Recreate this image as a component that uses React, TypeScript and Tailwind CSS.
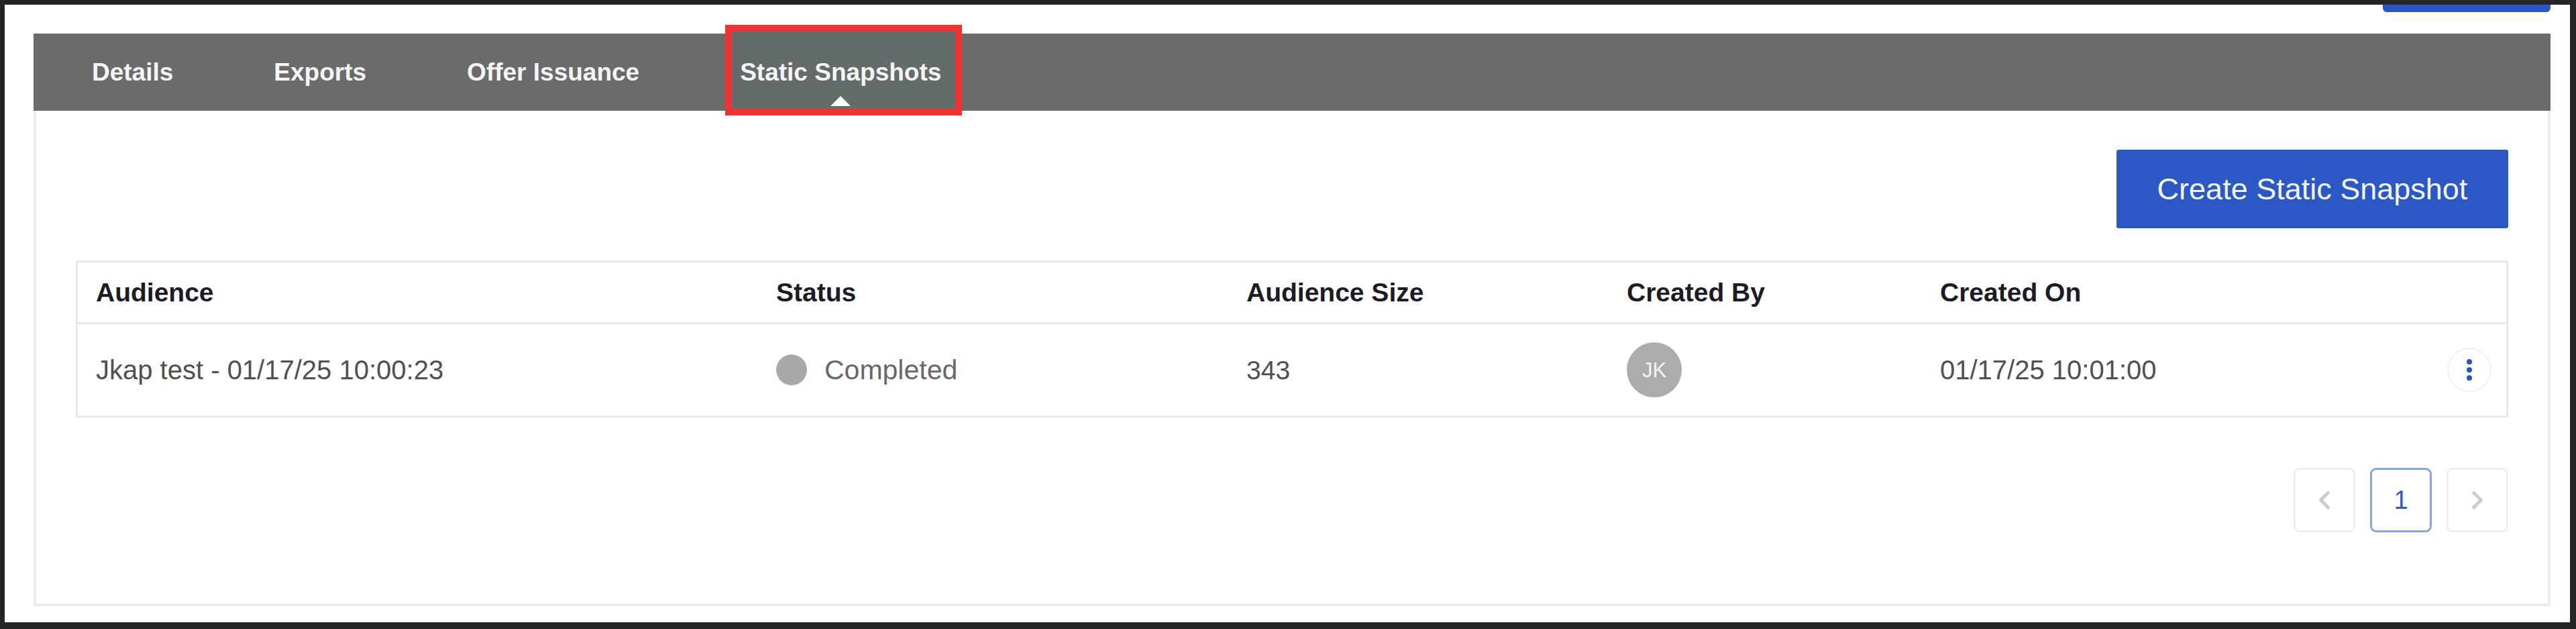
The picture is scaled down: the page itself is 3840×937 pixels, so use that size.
import { ChevronLeft, ChevronRight } from "lucide-react";

const tabs = ["Details", "Exports", "Offer Issuance", "Static Snapshots"];
const activeTab = "Static Snapshots";

const columns = ["Audience", "Status", "Audience Size", "Created By", "Created On"];

const rows = [
  {
    audience: "Jkap test - 01/17/25 10:00:23",
    status: "Completed",
    size: "343",
    initials: "JK",
    createdOn: "01/17/25 10:01:00",
  },
];

const gridCols = "grid grid-cols-[1014px_701px_567px_467px_1fr_66px] items-center pl-[27px] pr-[22px]";

function TabBar() {
  return (
    <div className="h-[115px] bg-[#6b6b6b] flex items-center pl-[87px] gap-[150px]">
      {tabs.map((t) => {
        const active = t === activeTab;
        return (
          <div key={t} className="relative h-full flex items-center">
            {active && (
              <div className="absolute -left-[22px] -right-[31px] -top-[13px] -bottom-[7px] border-[10px] border-[#f03232] bg-[#636b6b]" />
            )}
            <span className="relative z-10 text-[37px] font-bold text-[#f5f5f5] leading-none whitespace-nowrap">
              {t}
            </span>
            {active && (
              <span className="absolute z-10 left-1/2 -translate-x-1/2 bottom-[7px] w-0 h-0 border-l-[15px] border-r-[15px] border-b-[15px] border-l-transparent border-r-transparent border-b-white" />
            )}
          </div>
        );
      })}
    </div>
  );
}

function Kebab() {
  return (
    <div className="w-[66px] h-[66px] rounded-full border-2 border-[#efefef] flex flex-col items-center justify-center gap-[4px]">
      <span className="w-[8px] h-[8px] rounded-full bg-[#2a52c8]" />
      <span className="w-[8px] h-[8px] rounded-full bg-[#2a52c8]" />
      <span className="w-[8px] h-[8px] rounded-full bg-[#2a52c8]" />
    </div>
  );
}

function SnapshotTable() {
  return (
    <div className="border-[3px] border-[#e9e9e9]">
      <div className={`${gridCols} h-[92px] border-b-[3px] border-[#e9e9e9]`}>
        {columns.map((c) => (
          <div key={c} className="text-[39px] font-bold text-[#1c1c26] leading-none whitespace-nowrap">
            {c}
          </div>
        ))}
        <div />
      </div>
      {rows.map((r) => (
        <div key={r.audience} className={`${gridCols} h-[136px] text-[40px] leading-none text-[#505050]`}>
          <div className="whitespace-nowrap">{r.audience}</div>
          <div className="flex items-center gap-[26px]">
            <span className="w-[46px] h-[46px] rounded-full bg-[#a9a9a9]" />
            <span className="text-[#686868] text-[41px]">{r.status}</span>
          </div>
          <div className="text-[39px]">{r.size}</div>
          <div>
            <div className="w-[82px] h-[82px] rounded-full bg-[#acacac] flex items-center justify-center text-[31px] text-[#f4f4f4]">
              {r.initials}
            </div>
          </div>
          <div className="whitespace-nowrap">{r.createdOn}</div>
          <Kebab />
        </div>
      ))}
    </div>
  );
}

function Pagination() {
  return (
    <div className="flex justify-end gap-[22px]">
      <button className="w-[92px] h-[96px] rounded-[9px] border-[3px] border-[#eeeeee] flex items-center justify-center text-[#cbcbcb]">
        <ChevronLeft size={44} strokeWidth={2.6} />
      </button>
      <button className="w-[92px] h-[96px] rounded-[9px] border-[3px] border-[#87a1e6] flex items-center justify-center text-[38px] font-medium text-[#3357c8]">
        1
      </button>
      <button className="w-[92px] h-[96px] rounded-[9px] border-[3px] border-[#eeeeee] flex items-center justify-center text-[#cbcbcb]">
        <ChevronRight size={44} strokeWidth={2.6} />
      </button>
    </div>
  );
}

export default function App() {
  return (
    <div
      className="w-[3840px] h-[937px] border-[#262626] border-l-[7px] border-t-[7px] border-r-[9px] border-b-[10px] bg-white flex flex-col"
      style={{ fontFamily: '"Liberation Sans", Arial, sans-serif' }}
    >
      {/* bottom edge of a button above the visible area */}
      <div className="flex justify-end pr-[29px]">
        <div className="w-[250px] h-[11px] bg-[#2b55c6] rounded-b-[6px]" />
      </div>

      <div className="mt-[32px] ml-[43px] mr-[29px] h-[853px] flex flex-col">
        <TabBar />
        <div className="flex-1 border-x-4 border-b-4 border-[#ececec] px-[59px] pt-[58px]">
          <div className="flex justify-end">
            <button className="w-[584px] h-[117px] rounded-[3px] bg-[#2c58c6] text-[45px] text-[#f2f5fc] whitespace-nowrap">
              Create Static Snapshot
            </button>
          </div>
          <div className="mt-[48px]">
            <SnapshotTable />
          </div>
          <div className="mt-[75px]">
            <Pagination />
          </div>
        </div>
      </div>
    </div>
  );
}
